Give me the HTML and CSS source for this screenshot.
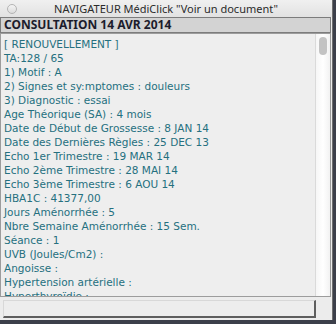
FILE: index.html
```html
<!DOCTYPE html>
<html lang="fr">
<head>
  <meta charset="UTF-8" />
  <title>NAVIGATEUR MédiClick "Voir un document"</title>
  <link rel="stylesheet" href="styles.css">
</head>
<body>
  <div class="window">
    <div class="titlebar">
      <span class="close-btn"></span>
      <span class="title">NAVIGATEUR MédiClick "Voir un document"</span>
      <span class="spacer"></span>
    </div>
    <div class="header">CONSULTATION 14 AVR 2014</div>
    <div class="content">
      <div class="text">
        <div>[ RENOUVELLEMENT ]</div>
        <div>TA:128 / 65</div>
        <div>1) Motif : A</div>
        <div>2) Signes et sy:mptomes : douleurs</div>
        <div>3) Diagnostic : essai</div>
        <div>Age Théorique (SA) : 4 mois</div>
        <div>Date de Début de Grossesse : 8 JAN 14</div>
        <div>Date des Dernières Règles : 25 DEC 13</div>
        <div>Echo 1er Trimestre : 19 MAR 14</div>
        <div>Echo 2ème Trimestre : 28 MAI 14</div>
        <div>Echo 3ème Trimestre : 6 AOU 14</div>
        <div>HBA1C : 41377,00</div>
        <div>Jours Aménorrhée : 5</div>
        <div>Nbre Semaine Aménorrhée : 15 Sem.</div>
        <div>Séance : 1</div>
        <div>UVB (Joules/Cm2) :</div>
        <div>Angoisse :</div>
        <div>Hypertension artérielle :</div>
        <div>Hyperthyroïdie :</div>
      </div>
      <div class="scrollbar"><div class="thumb"></div></div>
    </div>
    <div class="footer">
      <div class="field"></div>
    </div>
  </div>
</body>
</html>
```

FILE: styles.css
```css
* { box-sizing: border-box; }
body {
  margin: 0;
  background: #3c3f4a;
  font-family: 'DejaVu Sans', sans-serif;
  width: 336px;
  height: 324px;
  overflow: hidden;
}
.window {
  width: 333px;
  height: 320px;
  background: #ececec;
  border-right: 1px solid #6f6f6f;
  display: flex;
  flex-direction: column;
}
.titlebar {
  height: 18px;
  display: flex;
  align-items: center;
  padding: 0 7px;
  background: linear-gradient(#f0f0f0, #e2e2e2);
}
.close-btn {
  width: 10px;
  height: 10px;
  border-radius: 50%;
  border: 1px solid #b4b4b4;
  background: linear-gradient(#f4f4f4, #dcdcdc);
}
.spacer { width: 10px; }
.title {
  flex: 1;
  text-align: center;
  font-family: 'Noto Sans', sans-serif;
  font-size: 11px;
  color: #2b2b2b;
}
.header {
  height: 16px;
  margin: 0 1px 0 0;
  padding: 0 3px;
  border: 1px solid #7c7c7c;
  background: #d3d3d3;
  font-family: 'Noto Sans', sans-serif;
  font-size: 12px;
  font-weight: bold;
  line-height: 14px;
  color: #1c1c2c;
}
.content {
  height: 264px;
  margin: 0 1px 0 0;
  border: 1px solid #9c9c9c;
  background: #eeeeee;
  display: flex;
}
.text {
  flex: 1;
  overflow: hidden;
  padding: 3px 3px 0;
  font-size: 10.5px;
  line-height: 14px;
  color: #25707f;
  white-space: nowrap;
}
.scrollbar {
  width: 15px;
  border-left: 1px solid #dadada;
  background: linear-gradient(90deg, #f6f6f6, #ffffff 50%, #f2f2f2);
  padding: 3px 3px 0 3px;
}
.thumb {
  width: 8px;
  height: 18px;
  border-radius: 4px;
  background: #c3c3c3;
}
.footer {
  padding: 3px 16px 2px 3px;
  flex: 1;
}
.field {
  height: 18px;
  border: 1px solid #d8d8d8;
  border-right: 2px solid #5e5e5e;
  border-bottom: 2px solid #5e5e5e;
  background: #ededed;
}
```
